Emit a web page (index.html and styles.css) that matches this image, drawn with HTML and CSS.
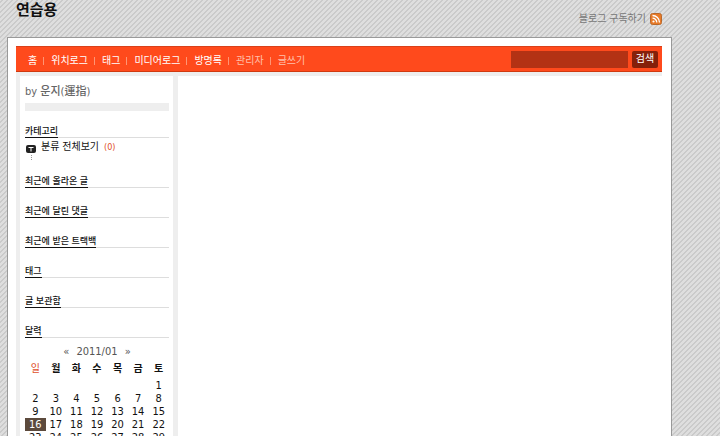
FILE: index.html
```html
<!DOCTYPE html>
<html lang="ko">
<head>
    <meta charset="UTF-8">
    <meta name="viewport" content="width=device-width, initial-scale=1.0">
    <title>연습용</title>
    <link rel="stylesheet" href="styles.css">
</head>
<body>

    <div class="page">
        <header class="header">
            <h1>연습용</h1>
            <a href="#" class="rss">
                블로그 구독하기
                <svg width="12" height="12" viewBox="0 0 12 12">
                    <rect x="0.5" y="0.5" width="11" height="11" rx="2" fill="#e87a28" stroke="#b9692c"/>
                    <circle cx="3.5" cy="8.5" r="1.1" fill="#fff"/>
                    <path d="M2.5 5.2a4.3 4.3 0 0 1 4.3 4.3M2.5 2.5a7 7 0 0 1 7 7" fill="none" stroke="#fff" stroke-width="1.3"/>
                </svg>
            </a>
        </header>

        <div class="container">
            <div class="menu">
                <nav>
                    <ul>
                        <li><a href="#">홈</a></li>
                        <li><a href="#">위치로그</a></li>
                        <li><a href="#">태그</a></li>
                        <li><a href="#">미디어로그</a></li>
                        <li><a href="#">방명록</a></li>
                        <li><a href="#" class="admin">관리자</a></li>
                        <li><a href="#" class="admin">글쓰기</a></li>
                    </ul>
                </nav>
                <form class="search">
                    <input type="text" aria-label="검색어">
                    <button type="button">검색</button>
                </form>
            </div>

            <div class="columns">
                <aside class="sidebar">
                    <p class="author">by <strong>운지(運指)</strong></p>
                    <div class="bar"></div>

                    <h3><span>카테고리</span></h3>
                    <div class="category">
                        <svg width="10" height="16" viewBox="0 0 10 16">
                            <rect x="0" y="0" width="10" height="8" rx="2" fill="#222"/>
                            <path d="M2.5 2.5h5M5 2.5v4" stroke="#fff" stroke-width="1"/>
                            <path d="M5.5 10v6" stroke="#999" stroke-dasharray="1 1"/>
                        </svg>
                        <a href="#">분류 전체보기</a>
                        <span class="count">(0)</span>
                    </div>

                    <h3><span>최근에 올라온 글</span></h3>
                    <h3><span>최근에 달린 댓글</span></h3>
                    <h3><span>최근에 받은 트랙백</span></h3>
                    <h3><span>태그</span></h3>
                    <h3><span>글 보관함</span></h3>
                    <h3><span>달력</span></h3>

                    <table class="calendar">
                        <caption><a href="#">«</a> <a href="#">2011/01</a> <a href="#">»</a></caption>
                        <thead>
                            <tr><th class="sunday">일</th><th>월</th><th>화</th><th>수</th><th>목</th><th>금</th><th>토</th></tr>
                        </thead>
                        <tbody>
                            <tr><td></td><td></td><td></td><td></td><td></td><td></td><td>1</td></tr>
                            <tr><td>2</td><td>3</td><td>4</td><td>5</td><td>6</td><td>7</td><td>8</td></tr>
                            <tr><td>9</td><td>10</td><td>11</td><td>12</td><td>13</td><td>14</td><td>15</td></tr>
                            <tr><td class="today">16</td><td>17</td><td>18</td><td>19</td><td>20</td><td>21</td><td>22</td></tr>
                            <tr><td>23</td><td>24</td><td>25</td><td>26</td><td>27</td><td>28</td><td>29</td></tr>
                        </tbody>
                    </table>
                </aside>
                <main class="content"></main>
            </div>
        </div>
    </div>

</body>
</html>
```

FILE: styles.css
```css
* {
    margin: 0;
    padding: 0;
    box-sizing: border-box;
}

body {
    height: 100vh;
    overflow: hidden;
    background: linear-gradient(135deg, #dedede 0, #dedede 12%, #bebebe 25%, #dedede 38%, #dedede 62%, #bebebe 75%, #dedede 88%);
    background-size: 5px 5px;
    font-family: "DejaVu Sans Condensed", "Noto Sans CJK KR", sans-serif;
    font-size: 10px;
    line-height: 14px;
    color: #111;
}

a {
    color: inherit;
    text-decoration: none;
}

.page {
    margin: 0 48px 0 7px;
}

/* 제목과 구독 링크 */
.header {
    display: flex;
    justify-content: space-between;
    height: 37px;
    padding: 0 10px 0 9px;
}

h1 {
    font-size: 15px;
    line-height: 20px;
}

.rss {
    display: flex;
    align-items: center;
    align-self: flex-end;
    gap: 4px;
    margin-bottom: 11px;
    color: #777;
}

.container {
    padding: 8px 9px 0 8px;
    background: white;
    border: 1px solid #999;
}

/* 메뉴 */
.menu {
    display: flex;
    justify-content: space-between;
    align-items: center;
    height: 26px;
    padding: 0 4px 0 6px;
    background: #ff4a1c;
    border-top: 1px solid #d9401a;
    border-bottom: 1px solid #d03a10;
}

.menu ul {
    display: flex;
    list-style: none;
    padding-top: 4px;
}

.menu li {
    display: flex;
    align-items: center;
    padding-left: 6px;
    color: white;
}

.menu li + li::before {
    content: "";
    height: 8px;
    margin-right: 7px;
    border-left: 1px solid #ff9575;
}

.menu .admin {
    color: #ffc0ab;
}

.search {
    display: flex;
    gap: 4px;
}

.search input {
    width: 117px;
    height: 17px;
    background: #b33214;
    border: none;
    color: white;
}

.search button {
    width: 26px;
    height: 17px;
    background: #85200a;
    border: none;
    border-radius: 2px;
    color: white;
    font: inherit;
}

.columns {
    display: flex;
    border-top: 4px solid #eee;
}

/* 사이드바 */
.sidebar {
    width: 162px;
    padding: 9px 4px 20px 5px;
    border-left: 4px solid #eee;
    border-right: 5px solid #eee;
}

.content {
    flex: 1;
}

.author {
    font-size: 11px;
    color: #666;
}

.author strong {
    font-weight: 500;
}

.bar {
    height: 8px;
    margin-top: 4px;
    background: #eee;
}

h3 {
    height: 13px;
    margin-top: 17px;
    border-bottom: 1px solid #ddd;
    font-size: 9px;
    font-weight: 500;
    line-height: 13px;
}

h3 span {
    display: inline-block;
    height: 13px;
    border-bottom: 1px solid #111;
}

.bar + h3 {
    margin-top: 14px;
}

.category {
    display: flex;
    gap: 5px;
    height: 20px;
    padding: 2px 0 0 1px;
}

.category svg {
    margin-top: 5px;
}

.category .count {
    font-size: 9px;
    color: #e0502a;
}

.calendar {
    width: 100%;
    margin-top: 7px;
    border-collapse: collapse;
    table-layout: fixed;
    text-align: center;
}

.calendar caption {
    font-size: 11px;
    color: #555;
    word-spacing: 4px;
}

.calendar th {
    height: 20px;
}

.calendar .sunday {
    color: #e0502a;
    font-weight: 400;
}

.calendar td {
    height: 13px;
    font-size: 11px;
    line-height: 13px;
}

.calendar .today {
    background: #5c4a3d;
    color: white;
}
```
